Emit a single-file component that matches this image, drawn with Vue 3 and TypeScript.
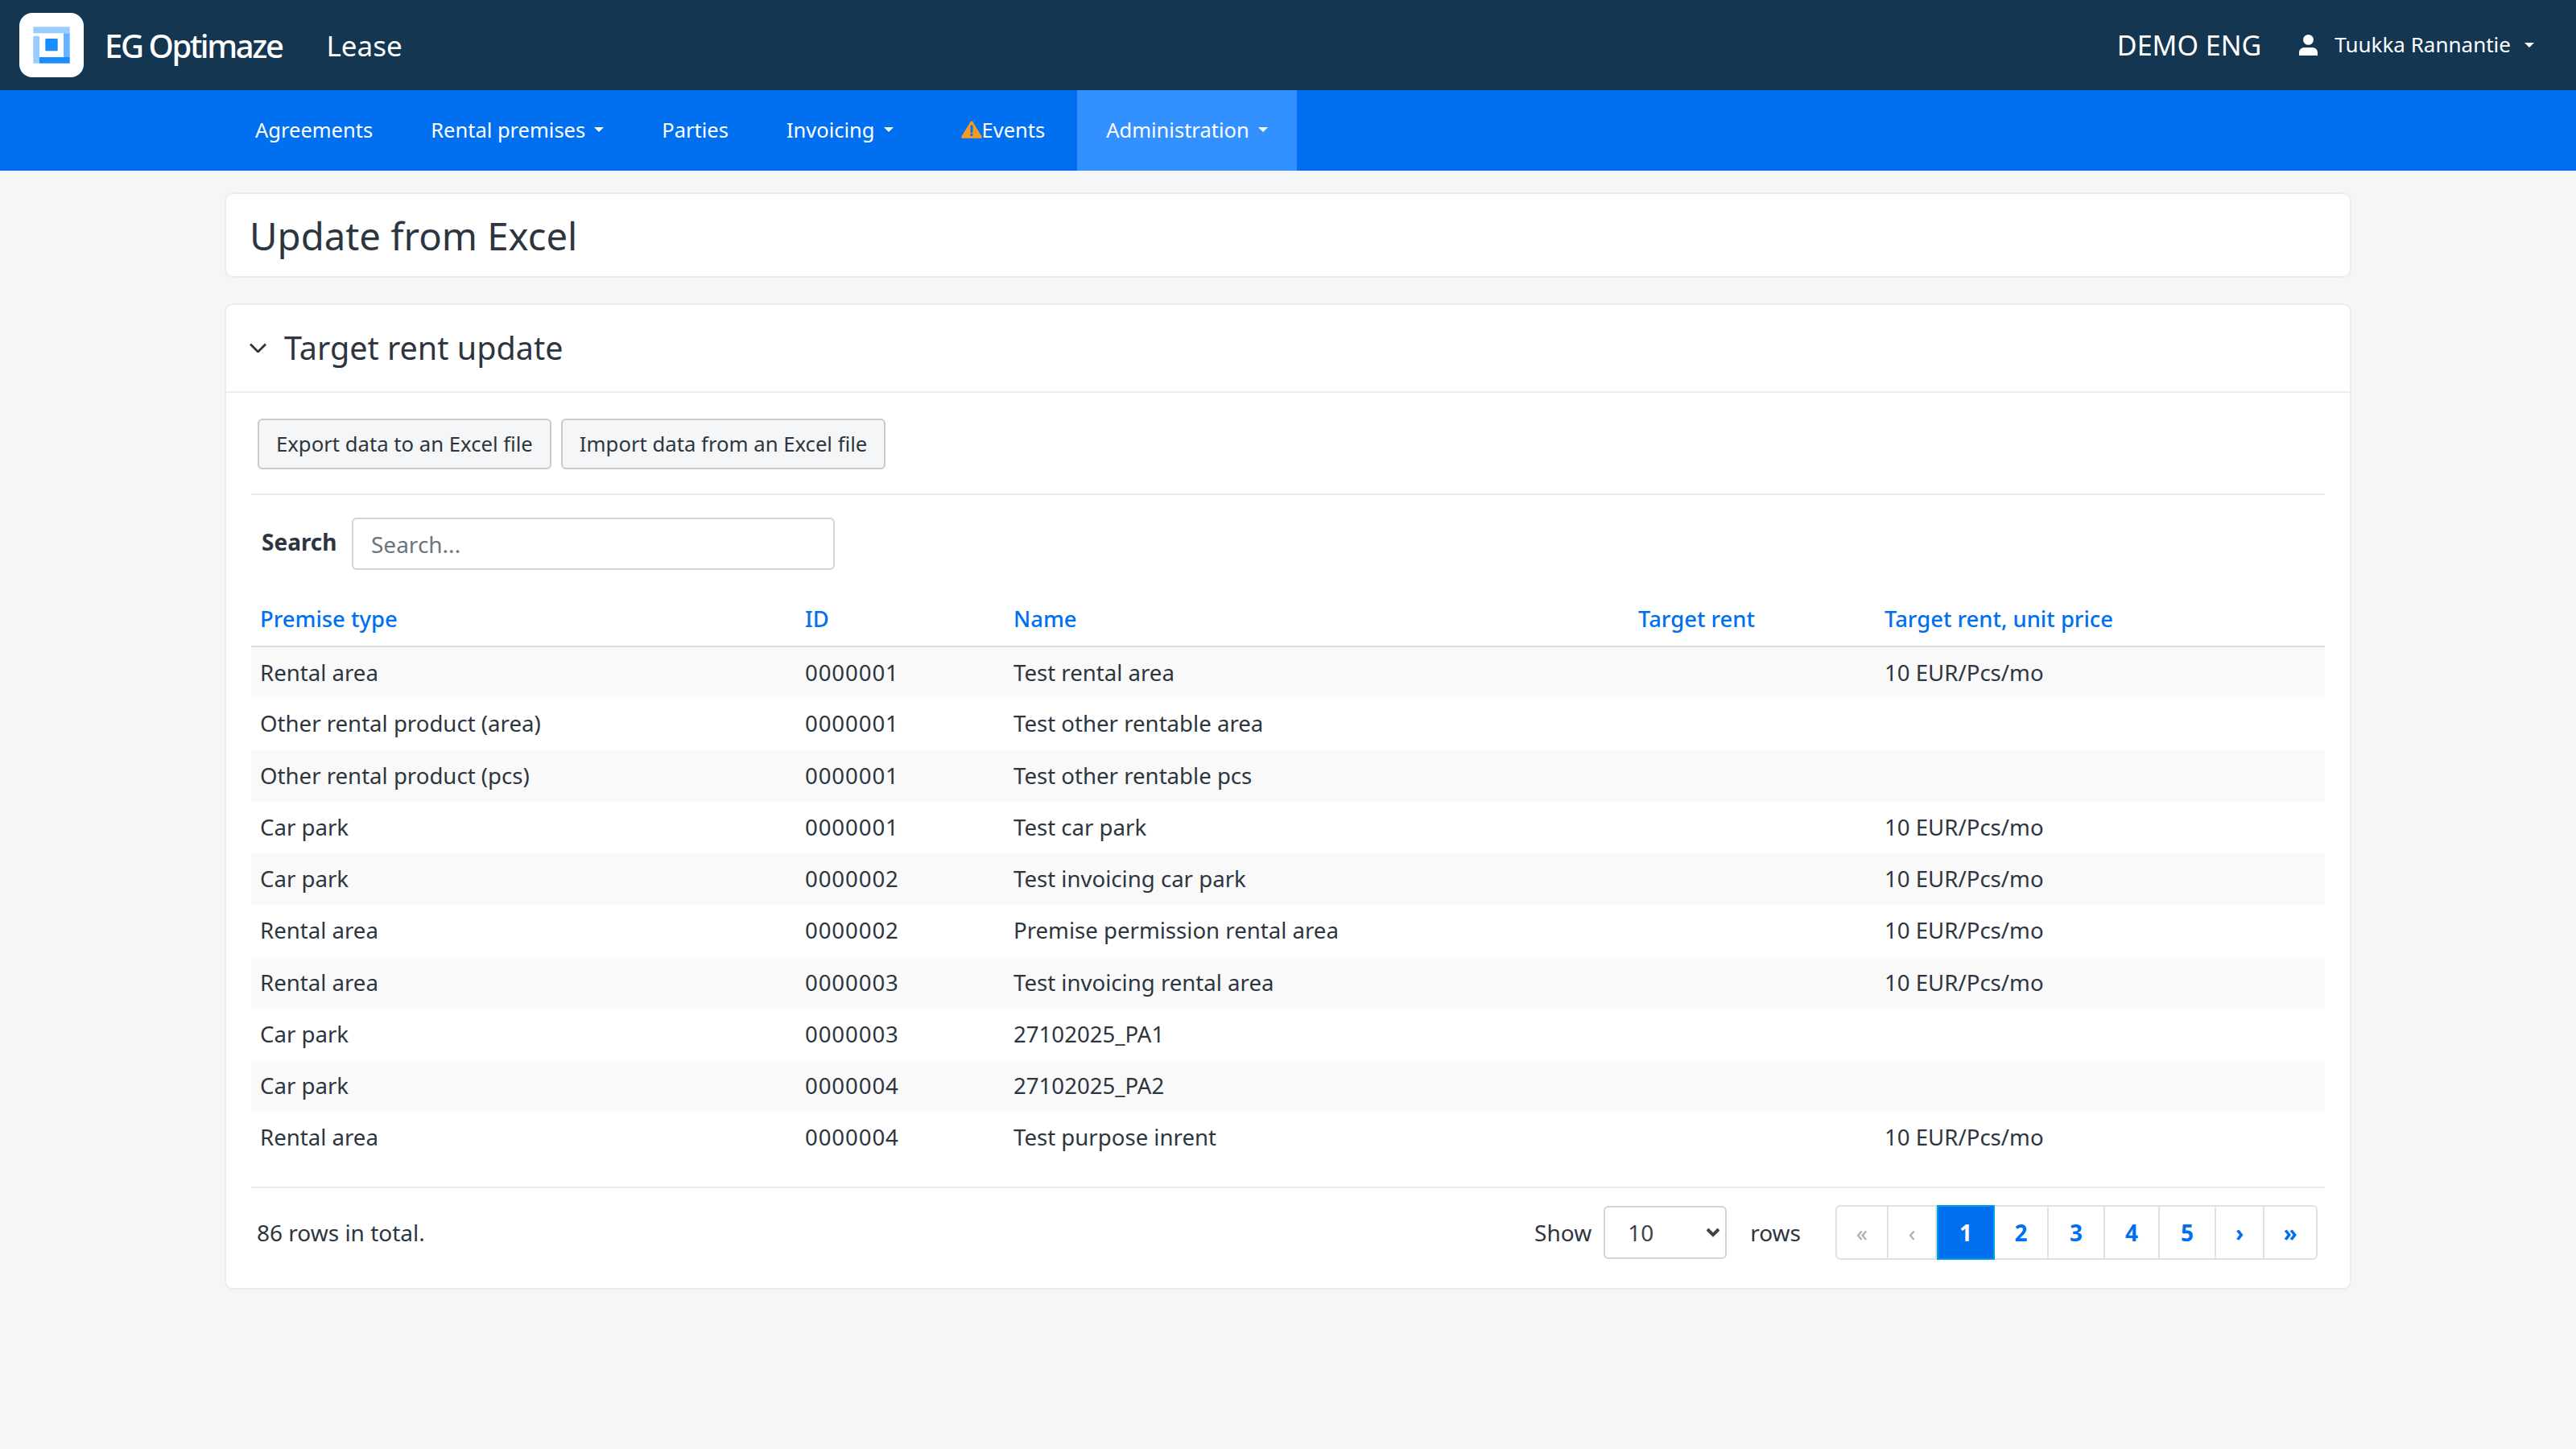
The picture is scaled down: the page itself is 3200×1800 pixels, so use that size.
<script setup lang="ts">
import { ref } from 'vue'

interface Row {
  type: string
  id: string
  name: string
  price: string
}

const search = ref('')
const pageSize = ref('10')

const navItems = [
  { label: 'Agreements', caret: false },
  { label: 'Rental premises', caret: true },
  { label: 'Parties', caret: false },
  { label: 'Invoicing', caret: true },
]

const columns = ['Premise type', 'ID', 'Name', 'Target rent', 'Target rent, unit price']

const unitPrice = '10 EUR/Pcs/mo'

const rows: Row[] = [
  { type: 'Rental area', id: '0000001', name: 'Test rental area', price: unitPrice },
  { type: 'Other rental product (area)', id: '0000001', name: 'Test other rentable area', price: '' },
  { type: 'Other rental product (pcs)', id: '0000001', name: 'Test other rentable pcs', price: '' },
  { type: 'Car park', id: '0000001', name: 'Test car park', price: unitPrice },
  { type: 'Car park', id: '0000002', name: 'Test invoicing car park', price: unitPrice },
  { type: 'Rental area', id: '0000002', name: 'Premise permission rental area', price: unitPrice },
  { type: 'Rental area', id: '0000003', name: 'Test invoicing rental area', price: unitPrice },
  { type: 'Car park', id: '0000003', name: '27102025_PA1', price: '' },
  { type: 'Car park', id: '0000004', name: '27102025_PA2', price: '' },
  { type: 'Rental area', id: '0000004', name: 'Test purpose inrent', price: unitPrice },
]

const pages = [
  { label: '«', cls: 'off w-edge' },
  { label: '‹', cls: 'off w-step' },
  { label: '1', cls: 'active w-1' },
  { label: '2', cls: 'w-2' },
  { label: '3', cls: 'w-3' },
  { label: '4', cls: 'w-4' },
  { label: '5', cls: 'w-3 five' },
  { label: '›', cls: 'w-step next' },
  { label: '»', cls: 'w-edge last' },
]
</script>

<template>
  <div class="app">
    <header class="topbar">
      <div class="logo">
        <svg width="80" height="80" viewBox="0 0 80 80">
          <rect x="17.300" y="17.300" width="45.400" height="8" fill="#99ccff" />
          <rect x="17.300" y="28.700" width="7.700" height="34" fill="#99ccff" />
          <rect x="55" y="25.300" width="7.700" height="29.700" fill="#66b3ff" />
          <rect x="25" y="55" width="37.700" height="7.700" fill="#1a8cff" />
          <rect x="32.300" y="32" width="15.400" height="15.300" rx="1" fill="#1a8cff" />
        </svg>
      </div>
      <span class="brand">EG Optimaze</span>
      <span class="module">Lease</span>
      <span class="company">DEMO ENG</span>
      <svg class="user-icon" width="23" height="26" viewBox="0 0 23 26">
        <circle cx="11.500" cy="6.400" r="6.400" fill="#fff" />
        <path d="M0 26v-3C0 18 3 16 7 16h9c4 0 7 2 7 7v3z" fill="#fff" />
      </svg>
      <span class="user">Tuukka Rannantie</span>
      <span class="caret"></span>
    </header>

    <nav class="navbar">
      <a v-for="item in navItems" :key="item.label" class="nav-item">
        {{ item.label }}<span v-if="item.caret" class="caret"></span>
      </a>
      <a class="nav-item events">
        <svg width="26" height="22" viewBox="0 0 26 22">
          <path d="M13 1.800 24.300 20.200H1.700z" fill="#f39c26" stroke="#f39c26" stroke-width="3" stroke-linejoin="round" />
          <rect x="11.500" y="5.500" width="3" height="9.500" rx="1.200" fill="#0070f0" />
          <circle cx="13" cy="17.500" r="1.700" fill="#0070f0" />
        </svg>Events
      </a>
      <a class="nav-item current">Administration<span class="caret"></span></a>
    </nav>

    <main class="content">
      <section class="card title-card">
        <h1>Update from Excel</h1>
      </section>

      <section class="card">
        <div class="card-head">
          <svg width="21" height="12" viewBox="0 0 21 12">
            <path d="M1 1.500 10.500 11 20 1.500" fill="none" stroke="#2d3540" stroke-width="2.800" />
          </svg>
          <h2>Target rent update</h2>
        </div>

        <div class="card-body">
          <div class="actions">
            <button type="button" class="btn">Export data to an Excel file</button>
            <button type="button" class="btn">Import data from an Excel file</button>
          </div>

          <div class="search-row">
            <label class="search-label" for="search">Search</label>
            <input id="search" v-model="search" class="search-input" placeholder="Search..." />
          </div>

          <table class="grid">
            <colgroup>
              <col class="c1" />
              <col class="c2" />
              <col class="c3" />
              <col class="c4" />
              <col />
            </colgroup>
            <thead>
              <tr>
                <th v-for="col in columns" :key="col">{{ col }}</th>
              </tr>
            </thead>
            <tbody>
              <tr v-for="row in rows" :key="row.type + row.id">
                <td>{{ row.type }}</td>
                <td class="id">{{ row.id }}</td>
                <td>{{ row.name }}</td>
                <td></td>
                <td>{{ row.price }}</td>
              </tr>
            </tbody>
          </table>

          <div class="table-foot">
            <span class="total">86 rows in total.</span>
            <span class="show">Show</span>
            <select v-model="pageSize" class="size-select">
              <option>10</option>
              <option>25</option>
              <option>50</option>
            </select>
            <span class="rows-label">rows</span>
            <ul class="pager">
              <li v-for="p in pages" :key="p.cls" :class="p.cls">{{ p.label }}</li>
            </ul>
          </div>
        </div>
      </section>
    </main>
  </div>
</template>

<style>
html,
body {
  margin: 0;
  background: #f5f6f8;
}
</style>

<style scoped>
.app {
  min-height: 1800px;
  background: #f5f6f8;
  color: #2d3540;
  font-family: "Noto Sans", "Liberation Sans", sans-serif;
  font-size: 28px;
}

.topbar {
  display: flex;
  align-items: center;
  height: 112px;
  padding: 0 52px 0 24px;
  background: #153651;
  color: #fff;
}

.logo {
  width: 80px;
  height: 80px;
  border-radius: 16px;
  background: #fff;
}

.logo svg {
  display: block;
}

.brand {
  margin-left: 26px;
  font-size: 40px;
  font-weight: 500;
  letter-spacing: -2.400px;
}

.module {
  margin-left: 55px;
  font-size: 35px;
}

.company {
  margin-left: auto;
  font-size: 34px;
}

.user-icon {
  margin-left: 47px;
}

.user {
  margin-left: 21px;
  margin-bottom: 2px;
  font-size: 26px;
}

.caret {
  display: inline-block;
  margin-left: 11px;
  border-top: 6px solid #fff;
  border-left: 6px solid transparent;
  border-right: 6px solid transparent;
  vertical-align: middle;
}

.topbar .caret {
  margin-left: 17px;
}

.navbar {
  display: flex;
  height: 100px;
  padding-left: 281px;
  background: #0070f0;
  color: #fff;
  font-size: 25.500px;
}

.nav-item {
  display: flex;
  align-items: center;
  padding: 0 36px 2px;
}

.events {
  margin-left: 12px;
  margin-right: 4px;
}

.current {
  background: #3390ff;
}

.content {
  width: 2642px;
  margin: 0 auto;
  padding-top: 27px;
}

.card {
  border: 2px solid #ebecee;
  border-radius: 10px;
  background: #fff;
}

.title-card {
  display: flex;
  align-items: center;
  box-sizing: border-box;
  height: 106px;
  margin-bottom: 32px;
  padding: 1px 0 0 29px;
}

h1 {
  margin: 0;
  font-size: 47.300px;
  font-weight: 400;
}

.card-head {
  display: flex;
  align-items: center;
  box-sizing: border-box;
  height: 109px;
  padding: 0 0 2px 29px;
  border-bottom: 2px solid #ebecee;
}

h2 {
  margin: 0 0 0 22px;
  font-size: 39.500px;
  font-weight: 400;
}

.card-body {
  padding: 32px 31px 35px;
}

.actions {
  display: flex;
  gap: 12px;
  padding: 0 8px 30px;
  border-bottom: 2px solid #ebecee;
}

.btn {
  height: 63px;
  padding: 0 21px;
  border: 2px solid #c8cacc;
  border-radius: 6px;
  background: #f5f6f7;
  color: #2d3540;
  font: inherit;
  font-size: 25.700px;
}

.search-row {
  display: flex;
  align-items: center;
  padding: 28px 0 26px 13px;
}

.search-label {
  width: 112px;
  margin-bottom: 6px;
  font-weight: 700;
}

.search-input {
  box-sizing: border-box;
  width: 600px;
  height: 65px;
  padding: 0 22px;
  border: 2px solid #ced4da;
  border-radius: 6px;
  outline: none;
  color: #2d3540;
  font: inherit;
}

.search-input::placeholder {
  color: #6c757d;
}

.grid {
  width: 100%;
  border-collapse: collapse;
  table-layout: fixed;
}

.c1 {
  width: 677px;
}

.c2 {
  width: 259px;
}

.c3 {
  width: 776px;
}

.c4 {
  width: 306px;
}

th {
  height: 68px;
  padding: 0 11px;
  border-bottom: 2px solid #dcdcdc;
  color: #0070f0;
  font-size: 27.400px;
  font-weight: 500;
  text-align: left;
}

td {
  box-sizing: border-box;
  height: 64.250px;
  padding: 0 11px 2px;
  font-size: 27.600px;
}

.id {
  letter-spacing: 0.900px;
}

tbody tr:nth-child(odd) {
  background: #f9f9f9;
}

.table-foot {
  display: flex;
  align-items: center;
  margin-top: 28px;
  padding: 21px 9px 0 7px;
  border-top: 2px solid #ebecee;
}

.total {
  margin-right: auto;
}

.size-select {
  box-sizing: border-box;
  width: 153px;
  height: 66px;
  margin: 0 29px 0 15px;
  padding: 0 28px;
  border: 2px solid #ced4da;
  border-radius: 6px;
  background: #fff url("data:image/svg+xml,%3Csvg xmlns='http://www.w3.org/2000/svg' width='18' height='12'%3E%3Cpath d='M2 2l7 7 7-7' fill='none' stroke='%233f444b' stroke-width='4'/%3E%3C/svg%3E") no-repeat right 6px center;
  color: #3f444b;
  font: inherit;
  appearance: none;
}

.pager {
  display: flex;
  height: 68px;
  margin: 0 0 0 43px;
  padding: 0;
  list-style: none;
}

.pager li {
  display: flex;
  align-items: center;
  justify-content: center;
  box-sizing: border-box;
  border: 2px solid #dee2e6;
  border-left-width: 0;
  color: #0070f0;
  font-weight: 700;
}

.pager li:first-child {
  border-left-width: 2px;
  border-radius: 6px 0 0 6px;
}

.pager li:last-child {
  border-radius: 0 6px 6px 0;
}

.pager .off {
  color: #a8abae;
  font-weight: 400;
}

.pager .active {
  border: 2px solid #00a0e0;
  background: #0070f0;
  color: #fff;
}

.w-edge {
  width: 66px;
}

.w-step {
  width: 60px;
}

.w-1 {
  width: 72px;
}

.w-2 {
  width: 67px;
}

.w-3 {
  width: 70px;
}

.w-4 {
  width: 68px;
}
</style>
